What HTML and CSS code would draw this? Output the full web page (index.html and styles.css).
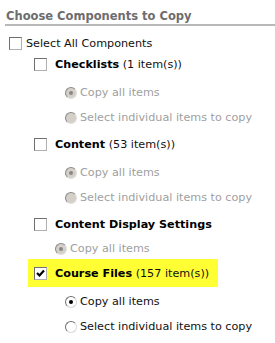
FILE: index.html
```html
<!DOCTYPE html>
<html lang="en">
<head>
    <meta charset="UTF-8">
    <title>Choose Components to Copy</title>
    <link rel="stylesheet" href="styles.css">
</head>
<body>
    <div class="panel">
        <h2 class="title">Choose Components to Copy</h2>

        <div class="row select-all">
            <span class="box"></span>
            <span class="label">Select All Components</span>
        </div>

        <div class="component">
            <div class="row head">
                <span class="box"></span>
                <span class="label"><b>Checklists</b> (1 item(s))</span>
            </div>
            <div class="options">
                <div class="row opt disabled"><span class="radio on"></span><span class="label">Copy all items</span></div>
                <div class="row opt disabled"><span class="radio"></span><span class="label">Select individual items to copy</span></div>
            </div>
        </div>

        <div class="component">
            <div class="row head">
                <span class="box"></span>
                <span class="label"><b>Content</b> (53 item(s))</span>
            </div>
            <div class="options">
                <div class="row opt disabled"><span class="radio on"></span><span class="label">Copy all items</span></div>
                <div class="row opt disabled"><span class="radio"></span><span class="label">Select individual items to copy</span></div>
            </div>
        </div>

        <div class="component">
            <div class="row head">
                <span class="box"></span>
                <span class="label"><b>Content Display Settings</b></span>
            </div>
            <div class="row opt single disabled"><span class="radio on"></span><span class="label">Copy all items</span></div>
        </div>

        <div class="component">
            <div class="row head highlight">
                <span class="box checked">
                    <svg width="9" height="9" viewBox="0 0 9 9"><path d="M1 4 L3.5 6.5 L8 1.5" fill="none" stroke="#000" stroke-width="2.2"/></svg>
                </span>
                <span class="label"><b>Course Files</b> (157 item(s))</span>
            </div>
            <div class="options">
                <div class="row opt"><span class="radio on"></span><span class="label">Copy all items</span></div>
                <div class="row opt"><span class="radio"></span><span class="label">Select individual items to copy</span></div>
            </div>
        </div>
    </div>
</body>
</html>
```

FILE: styles.css
```css
* {
    box-sizing: border-box;
    margin: 0;
    padding: 0;
}

body {
    font-family: 'DejaVu Sans', Verdana, sans-serif;
    font-size: 11.2px;
    color: #111;
    background: #fff;
}

.title {
    margin-left: 5px;
    padding: 8px 0 0 1px;
    line-height: 16px;
    font-size: 11.5px;
    font-weight: bold;
    color: #6d6d6d;
    border-bottom: 2px solid #b8b8b8;
}

.row {
    display: flex;
    align-items: center;
    height: 24px;
    white-space: nowrap;
}

.select-all {
    height: 18px;
    margin-top: 8px;
    padding-left: 9px;
}

.select-all .box {
    margin-right: 4px;
}

.head {
    padding-left: 34px;
}

.head .box {
    margin-right: 8px;
}

.head b {
    color: #000;
}

.highlight {
    width: 190px;
    height: 28px;
    margin: -2px 0 -2px 28px;
    padding-left: 6px;
    background: #ffff33;
}

.options {
    margin-top: 4px;
    margin-bottom: 2px;
}

.opt {
    height: 25px;
    padding-left: 65px;
}

.opt.single {
    padding-left: 55px;
}

.opt .radio {
    margin-right: 3px;
}

.disabled .label {
    color: #a0a0a0;
}

.box {
    display: inline-flex;
    align-items: center;
    justify-content: center;
    width: 13px;
    height: 13px;
    border: 1px solid;
    border-color: #6f6f6f #b0b0b0 #b0b0b0 #6f6f6f;
    background: #fff;
}

.radio {
    position: relative;
    display: inline-block;
    width: 12px;
    height: 12px;
    border: 1px solid;
    border-color: #707070 #d8d8d8 #d8d8d8 #707070;
    border-radius: 50%;
    background: #fff;
}

.disabled .radio {
    background: #d4d0c8;
    border-color: #8a8a8a #e0e0e0 #e0e0e0 #8a8a8a;
}

.radio.on::after {
    content: "";
    position: absolute;
    left: 3px;
    top: 3px;
    width: 4px;
    height: 4px;
    border-radius: 50%;
    background: #000;
}

.disabled .radio.on::after {
    background: #888;
}
```
